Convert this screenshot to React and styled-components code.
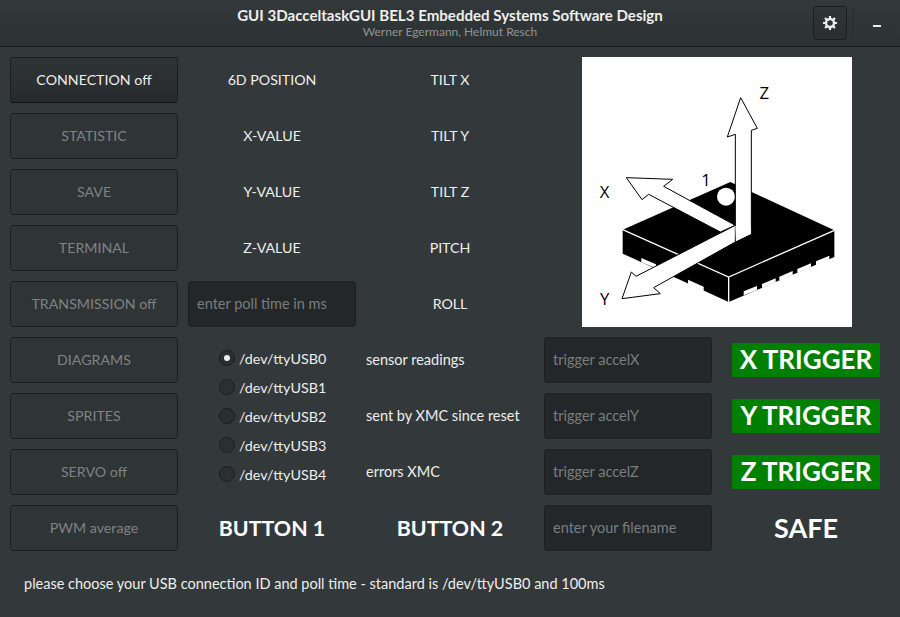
import React from 'react';
import styled, { createGlobalStyle, css } from 'styled-components';

const GlobalStyle = createGlobalStyle`
  html, body {
    margin: 0;
    padding: 0;
    height: 100%;
    background: #33393b;
  }
  * {
    box-sizing: border-box;
  }
`;

const fontStack = 'Lato, "Open Sans", sans-serif';

const Window = styled.div`
  width: 900px;
  height: 617px;
  background: #33393b;
  color: #eeeeec;
  font-family: ${fontStack};
  font-size: 14.5px;
  overflow: hidden;
`;

const TitleBar = styled.header`
  height: 47px;
  position: relative;
  display: flex;
  align-items: center;
  justify-content: flex-end;
  padding-right: 10px;
  background: linear-gradient(#33393b, #2c3133);
  border-bottom: 1px solid #16191a;
`;

const TitleBlock = styled.div`
  position: absolute;
  left: 0;
  right: 0;
  top: 6px;
  text-align: center;
  line-height: 18px;
`;

const Title = styled.div`
  font-size: 15.1px;
  font-weight: 700;
  color: #eeeeec;
`;

const SubTitle = styled.div`
  font-size: 12px;
  line-height: 16px;
  color: #919494;
`;

const GearButton = styled.button`
  position: relative;
  z-index: 1;
  width: 34px;
  height: 34px;
  padding: 0;
  display: flex;
  align-items: center;
  justify-content: center;
  color: #eeeeec;
  background: linear-gradient(#2f3436, #2a2e30);
  border: 1px solid #1b1f20;
  border-radius: 3px;
`;

const Separator = styled.div`
  width: 1px;
  height: 34px;
  margin: 0 19px 0 6px;
  background: #2a2e30;
`;

const MinimizeButton = styled.div`
  width: 8px;
  height: 2px;
  margin: 6px 9px 0 0;
  background: #eeeeec;
`;

const Grid = styled.main`
  display: grid;
  grid-template-columns: repeat(5, 168px);
  grid-auto-rows: 46px;
  gap: 10px;
  padding: 10px 10px 0;
`;

const ActionButton = styled.button`
  font-family: ${fontStack};
  font-size: 14.2px;
  border-radius: 3px;
  border: 1px solid #1b1f20;
  padding: 0 0 1px;
  ${(props) =>
    props.$active
      ? css`
          color: #eeeeec;
          background: linear-gradient(#2f3436, #272b2d);
          border-bottom-color: #111314;
        `
      : css`
          color: #7f8384;
          background: #2f3436;
        `}
`;

const Label = styled.div`
  display: flex;
  align-items: center;
  justify-content: ${(props) => (props.$left ? 'flex-start' : 'center')};
  padding-bottom: ${(props) => (props.$left ? '2px' : '1px')};
  font-size: ${(props) => (props.$left ? '14.5px' : '14.2px')};
  color: #eeeeec;
`;

const BigLabel = styled(Label)`
  font-size: 21.4px;
  font-weight: 700;
  color: #ffffff;
`;

const TextInput = styled.input`
  width: 100%;
  height: 100%;
  padding: 0 8px 1px;
  font-family: ${fontStack};
  font-size: 14.5px;
  color: #eeeeec;
  background: #232729;
  border: 1px solid #1b1f20;
  border-radius: 3px;
  outline: none;
  &::placeholder {
    color: #7a7e7f;
    opacity: 1;
  }
`;

const ImagePanel = styled.div`
  grid-column: 4 / 6;
  grid-row: 1 / 6;
  justify-self: center;
  width: 270px;
  height: 270px;
  background: #ffffff;
`;

const RadioColumn = styled.div`
  grid-column: 2;
  grid-row: 6 / 9;
  display: flex;
  flex-direction: column;
  gap: 9px;
  padding: 11px 0 0 31px;
`;

const RadioRow = styled.label`
  display: flex;
  align-items: center;
  gap: 4px;
  height: 20px;
  font-size: 14.3px;
  color: #eeeeec;
`;

const RadioInput = styled.input`
  appearance: none;
  margin: 0;
  width: 16px;
  height: 16px;
  border-radius: 50%;
  border: 1px solid #1b1f20;
  background: #2b2f31;
  display: grid;
  place-items: center;
  &:checked::after {
    content: '';
    width: 6px;
    height: 6px;
    border-radius: 50%;
    background: #eeeeec;
  }
`;

const TriggerCell = styled.div`
  display: flex;
  align-items: center;
  justify-content: center;
`;

const Trigger = styled.div`
  width: 148px;
  height: 34px;
  line-height: 33px;
  text-align: center;
  font-size: 26px;
  font-weight: 700;
  color: #ffffff;
  background: #008000;
  white-space: nowrap;
`;

const SafeLabel = styled(BigLabel)`
  font-size: 27px;
`;

const StatusLine = styled.footer`
  padding: 24px 0 0 24px;
  font-size: 14.5px;
  color: #eeeeec;
`;

function GearIcon() {
  return (
    <svg width="14" height="14" viewBox="0 0 14 14" fill="none">
      <circle cx="7" cy="7" r="4" stroke="currentColor" strokeWidth="2.4" />
      <g stroke="currentColor" strokeWidth="2.2">
        <path d="M7 0v2.5M7 11.5V14M0 7h2.5M11.5 7H14M2 2l1.8 1.8M10.2 10.2L12 12M12 2l-1.8 1.8M3.8 10.2L2 12" />
      </g>
    </svg>
  );
}

function SensorDiagram() {
  return (
    <svg width="270" height="270" viewBox="0 0 810 810">
      <path
        d="M445 375 L757 520 L757 600 L440 735 L122 590 L122 518 Z"
        fill="#000"
      />
      <path
        d="M122 518 L440 660 L757 520 M440 660 L440 735"
        fill="none"
        stroke="#fff"
        strokeWidth="4"
      />
      <circle cx="432" cy="419" r="27" fill="#fff" />
      <g fill="#fff">
        <path d="M178 603 L222 622 L222 634 L178 616 Z" />
        <path d="M318 668 L365 689 L365 702 L318 681 Z" />
        <path d="M485 703 L525 687 L525 699 L485 715 Z" />
        <path d="M540 681 L581 664 L581 676 L540 693 Z" />
        <path d="M592 659 L632 642 L632 654 L592 671 Z" />
        <path d="M646 636 L687 619 L687 631 L646 648 Z" />
        <path d="M702 613 L742 596 L742 608 L702 625 Z" />
      </g>
      <g fill="#fff" stroke="#000" strokeWidth="3" strokeLinejoin="miter">
        <path d="M133 362 L272 367 L245 388 L460 505 L415 525 L200 412 L180 428 Z" />
        <path d="M460 505 L162 658 L148 645 L120 725 L235 710 L215 692 L460 555 L508 532 L508 505 Z" />
        <path d="M476 122 L526 214 L508 220 L508 532 L460 555 L460 232 L436 240 Z" />
      </g>
      <path d="M460 507 L506 507 L506 530 L462 552 Z" fill="#fff" />
      <g fontFamily='"Open Sans", sans-serif' fontSize="50" fill="#000" textAnchor="middle">
        <text x="547" y="125">Z</text>
        <text x="68" y="422">X</text>
        <text x="68" y="743">Y</text>
        <text x="372" y="386">1</text>
      </g>
    </svg>
  );
}

const DEVICES = ['ttyUSB0', 'ttyUSB1', 'ttyUSB2', 'ttyUSB3', 'ttyUSB4'];

export default function App() {
  return (
    <Window>
      <GlobalStyle />
      <TitleBar>
        <TitleBlock>
          <Title>GUI 3DacceltaskGUI BEL3 Embedded Systems Software Design</Title>
          <SubTitle>Werner Egermann, Helmut Resch</SubTitle>
        </TitleBlock>
        <GearButton>
          <GearIcon />
        </GearButton>
        <Separator />
        <MinimizeButton />
      </TitleBar>
      <Grid>
        <ActionButton $active>CONNECTION off</ActionButton>
        <Label>6D POSITION</Label>
        <Label>TILT X</Label>
        <ImagePanel>
          <SensorDiagram />
        </ImagePanel>

        <ActionButton>STATISTIC</ActionButton>
        <Label>X-VALUE</Label>
        <Label>TILT Y</Label>

        <ActionButton>SAVE</ActionButton>
        <Label>Y-VALUE</Label>
        <Label>TILT Z</Label>

        <ActionButton>TERMINAL</ActionButton>
        <Label>Z-VALUE</Label>
        <Label>PITCH</Label>

        <ActionButton>TRANSMISSION off</ActionButton>
        <TextInput placeholder="enter poll time in ms" />
        <Label>ROLL</Label>

        <ActionButton>DIAGRAMS</ActionButton>
        <RadioColumn>
          {DEVICES.map((name, i) => (
            <RadioRow key={name}>
              <RadioInput type="radio" name="device" defaultChecked={i === 0} />
              /dev/{name}
            </RadioRow>
          ))}
        </RadioColumn>
        <Label $left>sensor readings</Label>
        <TextInput placeholder="trigger accelX" />
        <TriggerCell>
          <Trigger>X TRIGGER</Trigger>
        </TriggerCell>

        <ActionButton>SPRITES</ActionButton>
        <Label $left>sent by XMC since reset</Label>
        <TextInput placeholder="trigger accelY" />
        <TriggerCell>
          <Trigger>Y TRIGGER</Trigger>
        </TriggerCell>

        <ActionButton>SERVO off</ActionButton>
        <Label $left>errors XMC</Label>
        <TextInput placeholder="trigger accelZ" />
        <TriggerCell>
          <Trigger>Z TRIGGER</Trigger>
        </TriggerCell>

        <ActionButton>PWM average</ActionButton>
        <BigLabel>BUTTON 1</BigLabel>
        <BigLabel>BUTTON 2</BigLabel>
        <TextInput placeholder="enter your filename" />
        <SafeLabel>SAFE</SafeLabel>
      </Grid>
      <StatusLine>
        please choose your USB connection ID and poll time - standard is /dev/ttyUSB0 and 100ms
      </StatusLine>
    </Window>
  );
}
